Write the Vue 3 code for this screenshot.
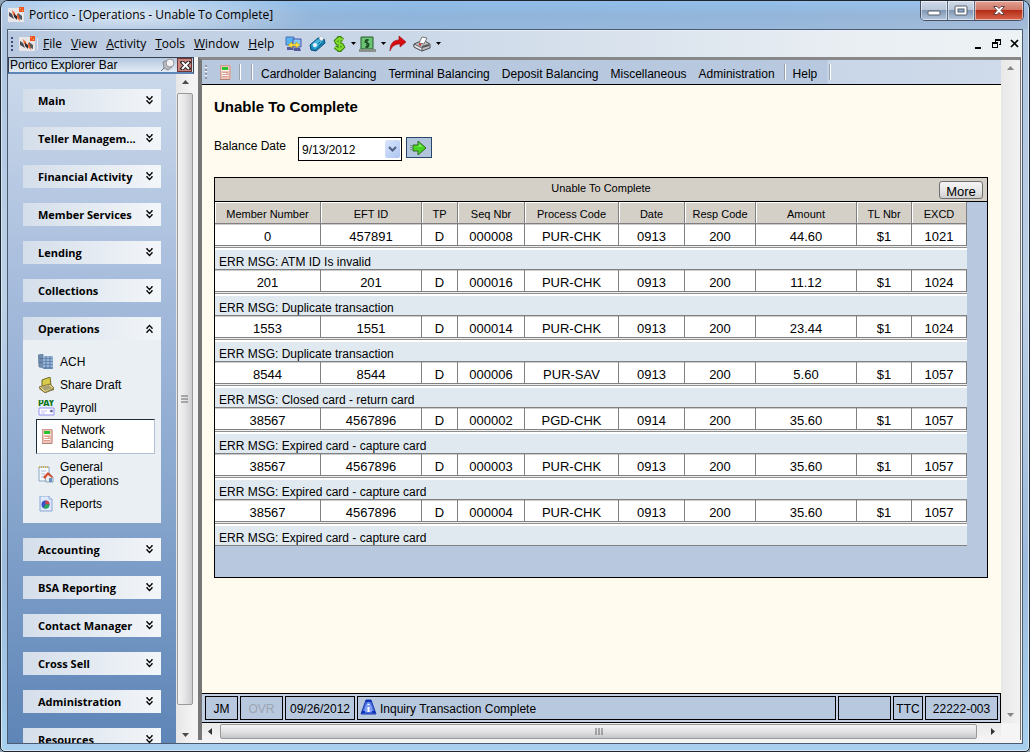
<script setup>
import { ref } from 'vue'

const menus = ['File', 'View', 'Activity', 'Tools', 'Window', 'Help']
const before = ['Main', 'Teller Managem...', 'Financial Activity', 'Member Services', 'Lending', 'Collections']
const after = ['Accounting', 'BSA Reporting', 'Contact Manager', 'Cross Sell', 'Administration', 'Resources']
const tabs = ['Cardholder Balancing', 'Terminal Balancing', 'Deposit Balancing', 'Miscellaneous', 'Administration']
const columns = [
  ['Member Number', 106], ['EFT ID', 101], ['TP', 36], ['Seq Nbr', 67], ['Process Code', 94],
  ['Date', 66], ['Resp Code', 71], ['Amount', 101], ['TL Nbr', 55], ['EXCD', 55]
]
const rows = [
  { cells: ['0', '457891', 'D', '000008', 'PUR-CHK', '0913', '200', '44.60', '$1', '1021'], msg: 'ATM ID Is invalid' },
  { cells: ['201', '201', 'D', '000016', 'PUR-CHK', '0913', '200', '11.12', '$1', '1024'], msg: 'Duplicate transaction' },
  { cells: ['1553', '1551', 'D', '000014', 'PUR-CHK', '0913', '200', '23.44', '$1', '1024'], msg: 'Duplicate transaction' },
  { cells: ['8544', '8544', 'D', '000006', 'PUR-SAV', '0913', '200', '5.60', '$1', '1057'], msg: 'Closed card - return card' },
  { cells: ['38567', '4567896', 'D', '000002', 'PGD-CHK', '0914', '200', '35.60', '$1', '1057'], msg: 'Expired card - capture card' },
  { cells: ['38567', '4567896', 'D', '000003', 'PUR-CHK', '0913', '200', '35.60', '$1', '1057'], msg: 'Expired card - capture card' },
  { cells: ['38567', '4567896', 'D', '000004', 'PUR-CHK', '0913', '200', '35.60', '$1', '1057'], msg: 'Expired card - capture card' }
]
const date = ref('9/13/2012')
</script>

<template>
  <div class="window">
    <svg class="defs" width="0" height="0" aria-hidden="true">
      <symbol id="logo" viewBox="0 0 16 16">
        <path d="M0 1h11v4h5v10H0z" fill="#e9e6e7" />
        <path d="M1 5l3 2 2 5-5-3z" fill="#4a4a55" />
        <path d="M10 6l4 3v4l-4-2z" fill="#565660" />
        <path d="M4 3l3 3 1 4-3-2zM9 6l2 3 1 5-3-3z" fill="#e2602c" />
        <path d="M6 7l3 2v4l-3-3z" fill="#2d2c35" />
        <path d="M11 0h5v5h-5z" fill="#ee5a1e" />
        <path d="M12 1h1v1h-1zM14 3h1v1h-1z" fill="#f9b27f" />
      </symbol>
      <symbol id="terminal" viewBox="0 0 13 17">
        <path d="M1 1h10l1 1v13l-2 1H1z" fill="#f0c2b6" />
        <path d="M1 1h10v1H2v13H1z" fill="#c99d93" />
        <path d="M10 2h2v13l-2 1z" fill="#d8ada3" />
        <path d="M3 3h6v3H3z" fill="#29c32f" />
        <path d="M2 6h8v1H2z" fill="#fff4ef" />
        <path d="M4 8h5v1H4zM4 10h5v1H4zM3 12h6v1H3z" fill="#d69c92" />
        <path d="M3 9h4v1H3zM3 11h6v1H3z" fill="#fff" />
        <path d="M1 15h10v1H1z" fill="#a9867f" />
      </symbol>
      <symbol id="chev" viewBox="0 0 7 9">
        <path d="M1 0v1l2.500 2.500L6 1V0M1 4v1l2.500 2.500L6 5V4" fill="none" stroke="#000" stroke-width="1.300" />
      </symbol>
    </svg>

    <header class="titlebar">
      <svg class="ico"><use href="#logo" /></svg>
      <h1>Portico - [Operations - Unable To Complete]</h1>
      <div class="winbtns">
        <button aria-label="Minimize"><svg width="14" height="12"><rect x="1" y="6" width="12" height="4" rx="1" fill="#fff" stroke="#545c6b" /></svg></button>
        <button aria-label="Maximize"><svg width="14" height="12"><rect x="1" y="1" width="12" height="9" rx="1" fill="#fff" stroke="#545c6b" /><rect x="4" y="4" width="6" height="3" fill="#90aace" stroke="#545c6b" /></svg></button>
        <button class="close" aria-label="Close"><svg width="14" height="12"><path d="M1.500 1.500h3.500l2 2 2-2h3.500L9 5.500l3.500 4H9l-2-2-2 2H1.500L5 5.500z" fill="#fff" stroke="#5f4448" /></svg></button>
      </div>
    </header>

    <div class="client">
      <div class="menubar">
        <i class="grip"></i>
        <svg class="ico"><use href="#logo" /></svg>
        <i class="tick"></i>
        <nav>
          <a v-for="m in menus" :key="m" href="#"><u>{{ m[0] }}</u>{{ m.slice(1) }}</a>
        </nav>
        <div class="tools">
          <button aria-label="Transfer">
            <svg width="17" height="16"><path d="M1 1h8v8H1z" fill="#56b5f0" stroke="#4a6fb5" /><path d="M8 3h8v8H8z" fill="#83c9f5" stroke="#4a55ad" /><path d="M2 11h6l1 3H2zM9 12h6l1 3H9z" fill="#565a9c" /><path d="M3 9l4-3v2h4V6l4 3-4 3v-2H7v2z" fill="#ffe13d" stroke="#a78918" stroke-width=".5" /></svg>
          </button>
          <button aria-label="Phone">
            <svg width="17" height="16"><path d="M1 9l8-7 6 1 1 4-9 8-5-1z" fill="#1686b9" stroke="#0b4c78" /><path d="M2 9l7-6 4 3-7 7z" fill="#45b7dd" /><path d="M10 2l2-2 3 2-2 3-2-1z" fill="#f2f5f7" stroke="#91a8b4" stroke-width=".5" /><circle cx="6" cy="9" r="2" fill="#f1eef9" /><path d="M9 8l2-2M10 10l3-3" stroke="#0c5b91" /></svg>
          </button>
          <button class="drop" aria-label="Currency">
            <svg width="13" height="16"><path d="M10 4L8 3H5L3 5l1 2 5 2 1 2-2 2H5l-3-2M6.500 0v16" fill="none" stroke="#357f0e" stroke-width="4" /><path d="M10 4L8 3H5L3 5l1 2 5 2 1 2-2 2H5l-3-2M6.500 1v14" fill="none" stroke="#82db2c" stroke-width="2" /></svg>
            <svg width="6" height="4"><path d="M0 0h5L2.500 3z" /></svg>
          </button>
          <button class="drop" aria-label="Cash">
            <svg width="17" height="16"><path d="M2 1h12v12H2z" fill="#6bc474" stroke="#245c2d" /><path d="M0 13h17v3H0z" fill="#89918b" /><path d="M10 4H7L6 6l4 2-1 3H6M8 3v9" fill="none" stroke="#143e1c" stroke-width="1.200" /></svg>
            <svg width="6" height="4"><path d="M0 0h5L2.500 3z" /></svg>
          </button>
          <button aria-label="Go">
            <svg width="17" height="16"><path d="M1 15C1 8 4 4 10 4V0l7 6-6 5V8C6 8 3 10 1 15z" fill="#d80d12" stroke="#970c10" stroke-width=".6" /></svg>
          </button>
          <button class="drop" aria-label="Print">
            <svg width="18" height="16"><path d="M1 8l9-4 7 4v4l-8 3-8-4z" fill="#bfc0c4" stroke="#4b4c50" /><path d="M1 8l8 4v3l-8-4z" fill="#ededee" stroke="#595b60" /><path d="M6 7l3-6 5 1-3 6z" fill="#fff" stroke="#777" /><path d="M9 11l7-2" stroke="#555" stroke-width="2" /><path d="M6 8l2 1" stroke="#d63232" stroke-width="2" /></svg>
            <svg width="6" height="4"><path d="M0 0h5L2.500 3z" /></svg>
          </button>
        </div>
        <div class="mdi">
          <button aria-label="Minimize document"><svg width="9" height="10"><path d="M1 8h6v2H1z" /></svg></button>
          <button aria-label="Restore document"><svg width="9" height="10"><path d="M3 0h6v6H7V5h1V2H4v1H3zM0 3h6v6H0zm1 2v3h4V5z" fill-rule="evenodd" /></svg></button>
          <button aria-label="Close document"><svg width="9" height="10"><path d="M1 1l7 7M8 1L1 8" stroke="#000" stroke-width="1.700" /></svg></button>
        </div>
      </div>

      <div class="body">
        <aside>
          <div class="barhead">
            <h2>Portico Explorer Bar</h2>
            <svg width="16" height="14"><path d="M1 13l4-4" stroke="#777" /><path d="M3 4l5-2 4 7-4 3-4-2z" fill="#b9bbc0" stroke="#8b8d92" /><circle cx="10" cy="5" r="4" fill="#f0f0f2" stroke="#96989d" /></svg>
            <button aria-label="Close bar"><svg width="11" height="9"><path d="M1 0l9 9M10 0L1 9" stroke="#222" stroke-width="4" /><path d="M2 1l7 7M9 1L2 8" stroke="#fff" stroke-width="2" /></svg></button>
          </div>
          <div class="scroller">
            <div class="groups">
              <button v-for="g in before" :key="g" class="group">{{ g }}<svg width="7" height="9"><use href="#chev" /></svg></button>
              <section>
                <button class="group">Operations<svg class="up" width="7" height="9"><use href="#chev" /></svg></button>
                <div class="links">
                  <a href="#">
                    <svg width="16" height="16"><path d="M0 1l5-1 1 14-5-1z" fill="#718eaf" stroke="#4c6685" stroke-width=".5" /><path d="M5 2h10v13H5z" fill="#6d8fbb" /><path d="M5 3h10M5 6h10M5 9h10M5 12h10" stroke="#c3d7ee" /><path d="M8 2v13M12 2v13M1 4l4 1M1 8l4 1" stroke="#3f5f8b" stroke-width=".6" /></svg>ACH</a>
                  <a href="#">
                    <svg width="17" height="16"><path d="M4 3l8-3 1 8-9 3z" fill="#d8cb4b" stroke="#6f6724" /><path d="M1 10l11-3 4 4-9 5z" fill="#eddc79" stroke="#80703b" /><path d="M3 10l8-2 3 3-7 3z" fill="#aaa276" /><path d="M1 11l6 4 9-4v2l-9 3-6-4z" fill="#867b4e" /></svg>Share Draft</a>
                  <a href="#">
                    <svg width="17" height="16"><text x="0" y="6" font-size="8" font-weight="bold" font-family="DejaVu Sans" fill="#087317">PAY</text><path d="M1 8h15v7H1z" fill="#fff" stroke="#9391f2" /><path d="M3 11h6M3 13h4M12 10h3v2h-3z" stroke="#c5c4fb" /></svg>Payroll</a>
                  <a href="#" class="selected" aria-current="page">
                    <svg width="13" height="17"><use href="#terminal" /></svg><span>Network Balancing</span></a>
                  <a href="#" class="tall">
                    <svg width="16" height="17"><path d="M1 1h10v14H1z" fill="#f4f9ff" stroke="#8ba7c5" /><path d="M1 1h10" stroke="#d3aa45" stroke-width="2" stroke-dasharray="1 1" /><path d="M3 5h5M3 8h4M3 11h3" stroke="#a9c0d9" /><path d="M7 11l4-4 4 4v5H8z" fill="#edf0f2" stroke="#6b85a0" stroke-width=".7" /><path d="M5 11l5-5 5 5-1 1-4-3-3 4z" fill="#d84a30" /><path d="M11 12h3v4h-3z" fill="#6790bd" /></svg><span>General Operations</span></a>
                  <a href="#">
                    <svg width="16" height="16"><path d="M2 0h9l3 3v12H2z" fill="#dfeaff" stroke="#8aa7d3" /><path d="M11 0v3h3" fill="#fff" stroke="#8aa7d3" /><circle cx="7.500" cy="8.500" r="4" fill="#3b50c4" /><path d="M7.500 8.500v-4a4 4 0 0 1 4 4z" fill="#d64545" /><path d="M7.500 8.500h4a4 4 0 0 1-6 3.500z" fill="#28ad56" /></svg>Reports</a>
                </div>
              </section>
              <button v-for="g in after" :key="g" class="group">{{ g }}<svg width="7" height="9"><use href="#chev" /></svg></button>
            </div>
            <div class="vscroll">
              <svg width="7" height="4"><path d="M0 4l3.500-4L7 4z" fill="#4b4b4b" /></svg>
              <div class="thumb"><svg width="8" height="8"><path d="M0 1h7M0 4h7M0 7h7" stroke="#666" /></svg></div>
              <svg width="7" height="4"><path d="M0 0h7L3.500 4z" fill="#4b4b4b" /></svg>
            </div>
          </div>
        </aside>

        <div class="mdiframe">
          <div class="docrow">
            <div class="doc">
              <div class="toolbar">
                <i class="grip light"></i>
                <svg width="13" height="17"><use href="#terminal" /></svg>
                <i class="sep one"></i><i class="sep two"></i>
                <nav><a v-for="t in tabs" :key="t" href="#">{{ t }}</a></nav>
                <i class="sep"></i>
                <a class="help" href="#">Help</a>
                <i class="sep"></i>
              </div>

              <main>
                <h2>Unable To Complete</h2>
                <form @submit.prevent>
                  <label for="bdate">Balance Date</label>
                  <div class="selectbox">
                    <select id="bdate" v-model="date"><option>9/13/2012</option></select>
                    <span class="arrow"><svg width="9" height="7"><path d="M1 1l3.500 3.500L8 1" fill="none" stroke="#4d6185" stroke-width="2" /></svg></span>
                  </div>
                  <button class="go" aria-label="Go"><svg width="18" height="16"><path d="M3 5h5V1l8 7-8 7v-4H3z" fill="#48d321" stroke="#336a22" /><path d="M1 5v6" stroke="#336a22" stroke-dasharray="1 1" /><path d="M4 6h5V4l4 3z" fill="#8df16a" /></svg></button>
                </form>

                <section class="grid">
                  <div class="caption"><h3 id="cap">Unable To Complete</h3><button>More</button></div>
                  <table aria-labelledby="cap">
                    <colgroup><col v-for="c in columns" :key="c[0]" :style="{ width: c[1] + 'px' }"></colgroup>
                    <thead><tr><th v-for="c in columns" :key="c[0]">{{ c[0] }}</th></tr></thead>
                    <tbody v-for="(r, i) in rows" :key="i">
                      <tr class="data"><td v-for="(c, j) in r.cells" :key="j">{{ c }}</td></tr>
                      <tr class="err"><td colspan="10">ERR MSG: {{ r.msg }}</td></tr>
                    </tbody>
                  </table>
                </section>
              </main>

              <footer>
                <span class="s1">JM</span><span class="s2">OVR</span><span class="s3">09/26/2012</span>
                <span class="s4"><svg width="17" height="16"><path d="M6 1h5l5 14H1z" fill="#456be0" stroke="#1638aa" /><path d="M5 8l3-5h1l3 5 1 5H4z" fill="#7f9df0" /><path d="M8.500 5v1M8.500 8v5" stroke="#fff" stroke-width="2" /><path d="M2 13h3M12 13h3M6 2h5" stroke="#1033bd" stroke-width="2" /></svg>Inquiry Transaction Complete</span>
                <span class="s5"></span><span class="s6">TTC</span><span class="s7">22222-003</span>
              </footer>
            </div>
            <div class="vscroll off">
              <svg width="7" height="4"><path d="M0 4l3.500-4L7 4z" fill="#858585" /></svg>
              <svg width="7" height="4"><path d="M0 0h7L3.500 4z" fill="#858585" /></svg>
            </div>
          </div>
          <div class="hscroll">
            <svg width="4" height="7"><path d="M4 0v7L0 3.500z" fill="#333" /></svg>
            <div class="thumb"><svg width="8" height="7"><path d="M1 0v7M4 0v7M7 0v7" stroke="#666" /></svg></div>
            <svg width="4" height="7"><path d="M0 0v7l4-3.500z" fill="#333" /></svg>
          </div>
        </div>
      </div>
    </div>
  </div>
</template>

<style>
body { background: #8fa3b5; overflow: hidden; }
</style>

<style scoped>
* { box-sizing: border-box; }
.window {
  height: 100vh; display: flex; flex-direction: column; overflow: hidden;
  border: 1px solid #20242c; border-radius: 8px 8px 5px 5px; padding: 0 6px 7px;
  background: linear-gradient(#9ab8d8 0, #b0c6e0 28px, #bcd0e6 40%, #9dbbdc 75%, #a8d0ee);
  box-shadow: inset 0 0 0 1px #d3e7f6;
  font-family: "Liberation Sans", Arial, sans-serif; font-size: 12px; line-height: 14px; color: #000;
}
.defs { position: absolute; }
svg { display: block; flex: none; }
.ico { width: 16px; height: 16px; }
button { font: inherit; color: inherit; border: 0; padding: 0; background: none; }
a { color: inherit; text-decoration: none; white-space: nowrap; }
h1, h2, h3 { margin: 0; font: inherit; }

.titlebar {
  flex: none; height: 28px; margin: 0 -5px; padding-left: 6px; display: flex; align-items: center; gap: 5px;
  background:
    radial-gradient(ellipse 190px 26px at 120px 14px, #e2edf8e0, #e2edf800),
    linear-gradient(90deg, #d5e4f200, #7eb2e370 40%, #7eb2e350 75%, #d5e4f200),
    linear-gradient(#9dc6ee, #9db7d6 50%, #a5bcd8);
  font-family: "Open Sans", "Noto Sans", sans-serif; font-size: 12px;
}
.winbtns { margin: 0 4px 0 auto; align-self: flex-start; display: flex; border: 1px solid #45506a; border-top: 0; border-radius: 0 0 5px 5px; overflow: hidden; }
.winbtns button { width: 27px; height: 19px; display: grid; place-items: center; background: linear-gradient(#d0dae8, #bac8da 45%, #8398b5 50%, #b3c7dd); box-shadow: inset 0 0 0 1px #ffffff80; border-right: 1px solid #5c6880; }
.winbtns .close { width: 48px; border: 0; background: linear-gradient(#e1a193, #d17a68 45%, #b42c17 50%, #d8654a); }

.client { flex: 1; min-height: 0; display: flex; flex-direction: column; border: 1px solid #4b5b70; background: #f4f4f4; }
.menubar { flex: none; height: 27px; display: flex; align-items: center; padding: 0 3px; border-top: 1px solid #e5eefa; background: linear-gradient(90deg, #b9c9e0, #cbd8e8 40%, #eaeff3 85%, #edf2f5); }
.grip { width: 2px; height: 14px; margin-right: 6px; background: repeating-linear-gradient(#3c4c78 0 2px, transparent 2px 4px); }
.grip.light { background: repeating-linear-gradient(#8d97a8 0 2px, #fff 2px 3px, transparent 3px 4px); }
.tick { width: 1px; height: 12px; margin-left: 2px; background: #e4eaf2; }
.menubar nav { display: flex; gap: 9px; margin-left: 5px; font-family: "Open Sans", "Noto Sans", sans-serif; font-size: 12px; }
.tools { display: flex; align-items: center; gap: 7px; margin-left: 11px; }
.drop { display: flex; align-items: center; gap: 5px; margin-right: -5px; }
.mdi { display: flex; gap: 9px; margin-left: auto; }

.body { flex: 1; min-height: 0; display: flex; }
aside { width: 186px; flex: none; display: flex; flex-direction: column; }
.barhead { flex: none; height: 17px; display: flex; align-items: center; padding: 0 1px 0 1px; border: 1px solid #384251; border-width: 1px 1px 0; border-bottom: 2px solid #5d86b8; background: linear-gradient(#b5c8e0, #e3ebf4); }
.barhead svg:first-of-type { margin-left: auto; }
.barhead button { width: 15px; height: 14px; margin-left: 1px; display: grid; place-items: center; border: 1px solid #6d3636; background: #c8847d; }
.scroller { flex: 1; min-height: 0; display: flex; }
.groups { flex: 1; min-width: 0; overflow: hidden; display: flex; flex-direction: column; gap: 15px; padding: 15px; background: linear-gradient(#cad8ea, #a4badb 34%, #85a4cc 66%, #5e85b7); }
.group { flex: none; width: 100%; height: 23px; display: flex; align-items: center; justify-content: space-between; padding: 0 8px 0 15px; background: linear-gradient(90deg, #d4deea, #f3f6f9); font-family: "Open Sans", "Noto Sans", sans-serif; font-size: 11px; font-weight: 700; white-space: nowrap; }
section { flex: none; }
.up { transform: rotate(180deg); }
.links { display: flex; flex-direction: column; background: #e9eff3; padding: 10px 6px 8px 14px; }
.links a { display: flex; align-items: center; height: 23px; gap: 5px; padding-left: 1px; white-space: normal; }
.links a > svg { width: 17px; }
.links a.selected { height: 35px; margin: 0 0 2px -1px; padding-left: 4px; border: 1px solid #b2c0d6; border-top-color: #1b2d3b; border-left-color: #1b2d3b; background: #fff; gap: 7px; }
.links a.selected > svg { width: 13px; }
.links a.selected span, .links a.tall span { width: 70px; }
.links a.tall { height: 36px; }

.vscroll { width: 18px; flex: none; display: flex; flex-direction: column; align-items: center; justify-content: space-between; padding: 6px 0; background: linear-gradient(90deg, #e6e6e6, #f5f5f5); }
.vscroll .thumb { flex: 1; width: 16px; margin: 9px 0 28px; display: grid; place-items: center; border: 1px solid #999; border-radius: 2px; background: linear-gradient(90deg, #f4f4f4, #e5e5e7 50%, #cccdd0); }
.vscroll.off { width: 19px; background: linear-gradient(90deg, #e8e8e8, #f2f2f2); }

.mdiframe { flex: 1; min-width: 0; margin: 0 1px 3px 4px; display: flex; flex-direction: column; border: solid #777; border-width: 3px 1px 0 4px; border-top-color: #888; background: #f5f5f5; }
.docrow { flex: 1; min-height: 0; display: flex; }
.doc { flex: 1; min-width: 0; display: flex; flex-direction: column; background: #fffbee; }
.toolbar { flex: none; height: 25px; display: flex; align-items: center; padding: 0 3px; border-bottom: 1px solid #000; background: linear-gradient(90deg, #b7c8df 625px, #c9d6e8 626px, #cfdbea); }
.toolbar .grip { margin-right: 12px; }
.toolbar nav { display: flex; gap: 12px; margin: 3px 9px 0 8px; }
.sep { width: 2px; height: 16px; border-left: 1px solid #99a2b0; border-right: 1px solid #fff; }
.one { margin-left: 7px; }
.two { margin-left: 10px; }
.toolbar .help { margin: 3px 12px 0 7px; }
main { flex: 1; min-height: 0; padding: 14px 13px 0 12px; }
main h2 { font-size: 15px; font-weight: 700; line-height: 16px; }
form { display: flex; align-items: flex-start; margin-top: 22px; }
form label { width: 84px; margin-top: 2px; }
.selectbox { position: relative; width: 104px; height: 24px; border: 1px solid #000; background: #fff; }
select { appearance: none; width: 100%; height: 100%; border: 0; padding: 2px 0 0 3px; background: none; font: inherit; color: inherit; }
.arrow { position: absolute; top: 2px; right: 1px; width: 15px; height: 18px; display: grid; place-items: center; border-radius: 2px; background: linear-gradient(135deg, #dae6fc, #adc4ef); pointer-events: none; }
.go { width: 26px; height: 21px; margin-left: 4px; display: grid; place-items: center; border: 1px solid #26476b; background: #b3c5dc; }

.grid { margin-top: 16px; padding-bottom: 31px; border: 1px solid #000; background: #b8c8de; }
.caption { position: relative; height: 24px; padding-top: 3px; border-bottom: 1px solid #000; background: #d4d0c8; text-align: center; font-size: 11px; }
.caption button { position: absolute; top: 3px; right: 4px; width: 44px; height: 18px; padding-top: 3px; border: 1px solid #6f6f6f; border-radius: 3px; background: linear-gradient(#f4f4f4, #e8e8e8 50%, #cfcfcf); font-size: 13px; line-height: 14px; }
table { width: calc(100% - 20px); table-layout: fixed; border-collapse: separate; border-spacing: 0; }
th, td { padding: 0; font-weight: 400; text-align: center; overflow: hidden; white-space: nowrap; }
th { height: 22px; padding-top: 2px; border: solid #808080; border-width: 0 1px 1px 0; background: #d4d0c8; box-shadow: inset 1px 1px #fff; font-size: 11px; }
.data td { height: 22px; padding-top: 4px; border: solid #808080; border-width: 0 1px 1px 0; background: linear-gradient(#ccc 1px, #fff 1px); font-size: 13px; }
.err td { height: 24px; padding: 8px 0 0 4px; text-align: left; border-bottom: 1px solid #808080; background: linear-gradient(#eee 0 1px, #909090 1px 2px, #fff 2px 4px, #e1e9f0 4px); }

footer { flex: none; height: 30px; display: flex; gap: 2px; padding: 2px 2px 2px 3px; border: 1px solid #000; border-left-width: 0; background: #c3d0e3; }
footer span { display: flex; align-items: center; justify-content: center; height: 24px; padding-top: 2px; border: 1px solid #000; background: #b8c8de; white-space: nowrap; }
.s1 { width: 33px; }
.s2 { width: 43px; color: #9da5b0; }
.s3 { width: 70px; }
footer .s4 { flex: 1; justify-content: flex-start; gap: 3px; padding-left: 2px; }
.s4 svg { margin-top: -4px; }
.s5 { width: 53px; }
.s6 { width: 30px; }
.s7 { width: 73px; }

.hscroll { flex: none; height: 17px; margin-right: 19px; display: flex; align-items: center; padding: 1px 6px; background: linear-gradient(#e8e8e8, #f5f5f5); }
.hscroll .thumb { flex: 1; height: 15px; margin: 0 14px 0 8px; display: grid; place-items: center; border: 1px solid #999; border-radius: 2px; background: linear-gradient(#f4f4f4, #e2e2e4 50%, #c5c6c9); }
</style>
